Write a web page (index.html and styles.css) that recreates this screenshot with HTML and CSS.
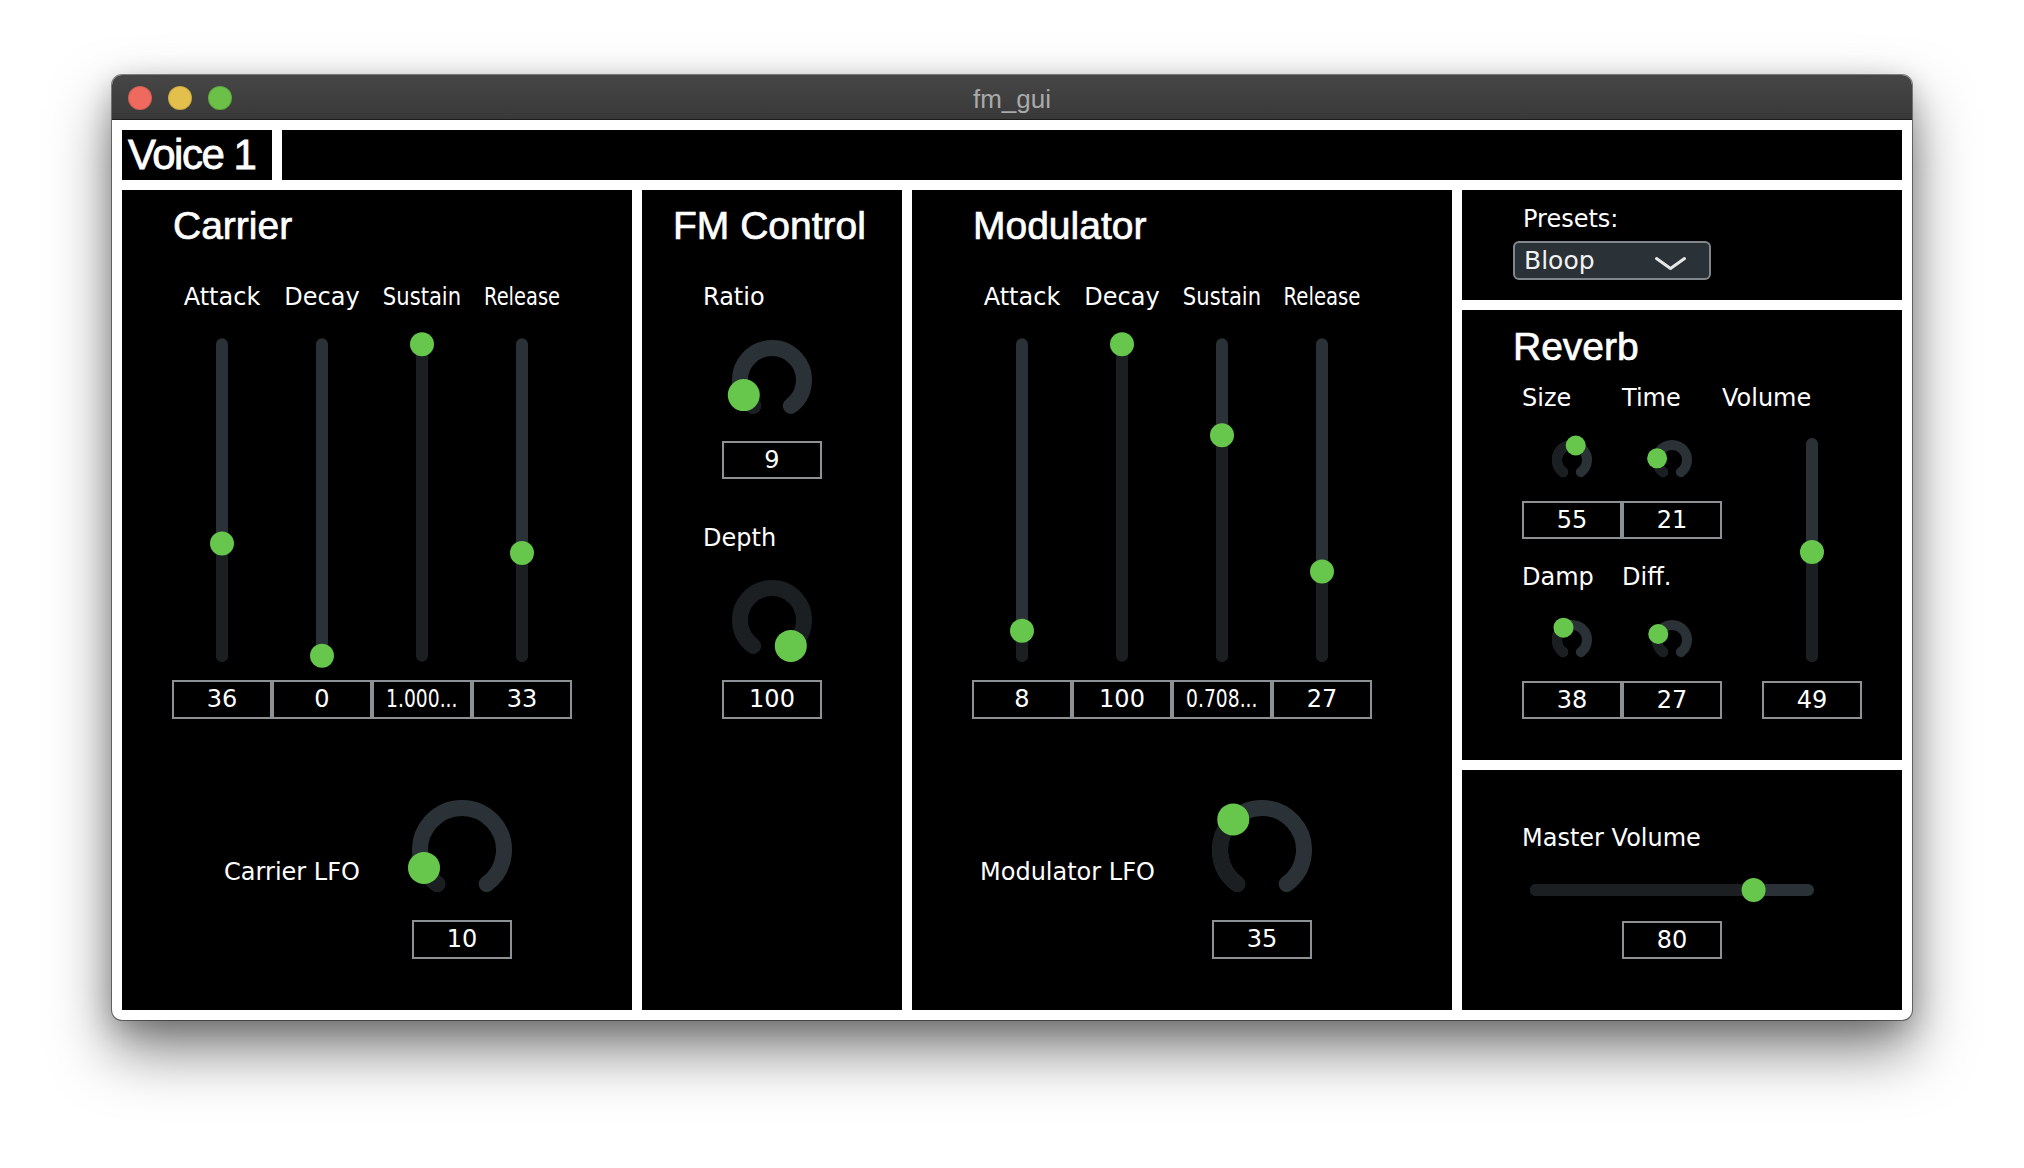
FILE: index.html
```html
<!DOCTYPE html>
<html>
<head>
<meta charset="utf-8">
<title>fm_gui</title>
<link rel="stylesheet" href="styles.css">
</head>
<body>
<div class="window">
  <div class="titlebar">
    <div class="lights"><span class="light red"></span><span class="light yellow"></span><span class="light green"></span></div>
    <div class="wtitle">fm_gui</div>
    <div></div>
  </div>
  <div class="content">
    <div class="voice-row">
      <div class="voice">Voice 1</div>
      <div class="voice-bar"></div>
    </div>
    <div class="main">
      <section class="panel carrier">
        <h2 class="ptitle">Carrier</h2>
        <div class="row4 labels">
          <span>Attack</span><span>Decay</span><span class="sq88">Sustain</span><span class="sq81">Release</span>
        </div>
        <div class="row4 sliders">
          <svg class="vs" width="24" height="340" viewBox="0 0 24 340"><line class="tr-bg" x1="12" y1="14.3" x2="12" y2="325.7"/><line class="tr-fg" x1="12" y1="325.7" x2="12" y2="213.6"/><circle class="th" cx="12" cy="213.6" r="12"/></svg>
          <svg class="vs" width="24" height="340" viewBox="0 0 24 340"><line class="tr-bg" x1="12" y1="14.3" x2="12" y2="325.7"/><circle class="th" cx="12" cy="325.7" r="12"/></svg>
          <svg class="vs" width="24" height="340" viewBox="0 0 24 340"><line class="tr-fg" x1="12" y1="14.3" x2="12" y2="325.7"/><circle class="th" cx="12" cy="14.3" r="12"/></svg>
          <svg class="vs" width="24" height="340" viewBox="0 0 24 340"><line class="tr-bg" x1="12" y1="14.3" x2="12" y2="325.7"/><line class="tr-fg" x1="12" y1="325.7" x2="12" y2="222.9"/><circle class="th" cx="12" cy="222.9" r="12"/></svg>
        </div>
        <div class="row4 boxes">
          <div class="vbox">36</div><div class="vbox">0</div><div class="vbox"><span class="sqt">1.000...</span></div><div class="vbox">33</div>
        </div>
        <div class="lfo">
          <div class="lfo-label">Carrier LFO</div>
          <div class="knobcol">
            <svg class="knob" width="100" height="100" viewBox="0 0 100 100"><path class="arc-bg" stroke-width="16" d="M25.31 83.98 A42 42 0 1 1 74.69 83.98"/><path class="arc-fg" stroke-width="16" d="M25.31 83.98 A42 42 0 0 1 12.00 67.88"/><circle class="th" cx="12.00" cy="67.88" r="16"/></svg>
            <div class="vbox">10</div>
          </div>
        </div>
      </section>

      <section class="panel fm">
        <h2 class="ptitle">FM Control</h2>
        <div class="fm-label first">Ratio</div>
        <svg class="knob k80" width="80" height="80" viewBox="0 0 80 80"><path class="arc-bg" stroke-width="16" d="M21.19 65.89 A32 32 0 1 1 58.81 65.89"/><path class="arc-fg" stroke-width="16" d="M21.19 65.89 A32 32 0 0 1 11.77 55.07"/><circle class="th" cx="11.77" cy="55.07" r="16"/></svg>
        <div class="vbox">9</div>
        <div class="fm-label second">Depth</div>
        <svg class="knob k80 kd" width="80" height="80" viewBox="0 0 80 80"><path class="arc-fg" stroke-width="16" d="M21.19 65.89 A32 32 0 1 1 58.81 65.89"/><circle class="th" cx="58.81" cy="65.89" r="16"/></svg>
        <div class="vbox">100</div>
      </section>

      <section class="panel mod">
        <h2 class="ptitle">Modulator</h2>
        <div class="row4 labels">
          <span>Attack</span><span>Decay</span><span class="sq88">Sustain</span><span class="sq82">Release</span>
        </div>
        <div class="row4 sliders">
          <svg class="vs" width="24" height="340" viewBox="0 0 24 340"><line class="tr-bg" x1="12" y1="14.3" x2="12" y2="325.7"/><line class="tr-fg" x1="12" y1="325.7" x2="12" y2="300.8"/><circle class="th" cx="12" cy="300.8" r="12"/></svg>
          <svg class="vs" width="24" height="340" viewBox="0 0 24 340"><line class="tr-fg" x1="12" y1="14.3" x2="12" y2="325.7"/><circle class="th" cx="12" cy="14.3" r="12"/></svg>
          <svg class="vs" width="24" height="340" viewBox="0 0 24 340"><line class="tr-bg" x1="12" y1="14.3" x2="12" y2="325.7"/><line class="tr-fg" x1="12" y1="325.7" x2="12" y2="105.2"/><circle class="th" cx="12" cy="105.2" r="12"/></svg>
          <svg class="vs" width="24" height="340" viewBox="0 0 24 340"><line class="tr-bg" x1="12" y1="14.3" x2="12" y2="325.7"/><line class="tr-fg" x1="12" y1="325.7" x2="12" y2="241.6"/><circle class="th" cx="12" cy="241.6" r="12"/></svg>
        </div>
        <div class="row4 boxes">
          <div class="vbox">8</div><div class="vbox">100</div><div class="vbox"><span class="sqt">0.708...</span></div><div class="vbox">27</div>
        </div>
        <div class="lfo">
          <div class="lfo-label">Modulator LFO</div>
          <div class="knobcol">
            <svg class="knob" width="100" height="100" viewBox="0 0 100 100"><path class="arc-bg" stroke-width="16" d="M25.31 83.98 A42 42 0 1 1 74.69 83.98"/><path class="arc-fg" stroke-width="16" d="M25.31 83.98 A42 42 0 0 1 21.25 19.38"/><circle class="th" cx="21.25" cy="19.38" r="16"/></svg>
            <div class="vbox">35</div>
          </div>
        </div>
      </section>

      <div class="rightcol">
        <section class="panel presets">
          <div class="pr-label">Presets:</div>
          <div class="combo">
            <span class="combo-text">Bloop</span>
            <svg class="chev" width="31" height="13" viewBox="0 0 31 13"><polyline points="1.5,1.5 15.5,11.5 29.5,1.5"/></svg>
          </div>
        </section>

        <section class="panel reverb">
          <h2 class="ptitle">Reverb</h2>
          <div class="rv-body">
            <div class="rv-left">
              <div class="rv-row rv-lab"><span>Size</span><span>Time</span></div>
              <div class="rv-row rv-knobs">
                <svg class="knob" width="40" height="40" viewBox="0 0 40 40"><path class="arc-bg" stroke-width="10" d="M11.18 32.14 A15 15 0 1 1 28.82 32.14"/><path class="arc-fg" stroke-width="10" d="M11.18 32.14 A15 15 0 0 1 23.73 5.47"/><circle class="th" cx="23.73" cy="5.47" r="10"/></svg>
                <svg class="knob" width="40" height="40" viewBox="0 0 40 40"><path class="arc-bg" stroke-width="10" d="M11.18 32.14 A15 15 0 1 1 28.82 32.14"/><path class="arc-fg" stroke-width="10" d="M11.18 32.14 A15 15 0 0 1 5.10 18.31"/><circle class="th" cx="5.10" cy="18.31" r="10"/></svg>
              </div>
              <div class="rv-row rv-boxes"><div class="vbox">55</div><div class="vbox">21</div></div>
              <div class="rv-row rv-lab second"><span>Damp</span><span>Diff.</span></div>
              <div class="rv-row rv-knobs second">
                <svg class="knob" width="40" height="40" viewBox="0 0 40 40"><path class="arc-bg" stroke-width="10" d="M11.18 32.14 A15 15 0 1 1 28.82 32.14"/><path class="arc-fg" stroke-width="10" d="M11.18 32.14 A15 15 0 0 1 11.49 7.65"/><circle class="th" cx="11.49" cy="7.65" r="10"/></svg>
                <svg class="knob" width="40" height="40" viewBox="0 0 40 40"><path class="arc-bg" stroke-width="10" d="M11.18 32.14 A15 15 0 1 1 28.82 32.14"/><path class="arc-fg" stroke-width="10" d="M11.18 32.14 A15 15 0 0 1 6.27 13.96"/><circle class="th" cx="6.27" cy="13.96" r="10"/></svg>
              </div>
              <div class="rv-row rv-boxes"><div class="vbox">38</div><div class="vbox">27</div></div>
            </div>
            <div class="rv-right">
              <div class="rv-lab">Volume</div>
              <svg class="vs" width="24" height="240" viewBox="0 0 24 240"><line class="tr-bg" x1="12" y1="14" x2="12" y2="226"/><line class="tr-fg" x1="12" y1="226" x2="12" y2="122.1"/><circle class="th" cx="12" cy="122.1" r="12"/></svg>
              <div class="vbox">49</div>
            </div>
          </div>
        </section>

        <section class="panel master">
          <div class="ms-label">Master Volume</div>
          <svg class="hs" width="296" height="24" viewBox="0 0 296 24"><line class="tr-bg" x1="12" y1="12" x2="284" y2="12"/><line class="tr-fg" x1="12" y1="12" x2="229.6" y2="12"/><circle class="th" cx="229.6" cy="12" r="12"/></svg>
          <div class="vbox">80</div>
        </section>
      </div>
    </div>
  </div>
</div>
</body>
</html>
```

FILE: styles.css
```css
* { box-sizing: border-box; }

html, body { background: #ffffff; }

body {
  margin: 0;
  padding: 75px 0 0 112px;
  width: 2024px;
  height: 1168px;
  overflow: hidden;
  font-family: "DejaVu Sans", sans-serif;
  color: #ffffff;
}

.window {
  width: 1800px;
  height: 945px;
  border-radius: 10px;
  background: #ffffff;
  overflow: hidden;
  box-shadow: 0 0 0 1px rgba(0, 0, 0, 0.45), 0 30px 60px rgba(0, 0, 0, 0.5), 0 8px 28px rgba(0, 0, 0, 0.22);
}

.titlebar {
  height: 45px;
  border-bottom: 1px solid #1c1c1c;
  background: linear-gradient(#464646, #393939);
  display: grid;
  grid-template-columns: 1fr auto 1fr;
  align-items: center;
}

.lights { display: flex; gap: 16px; padding-left: 16px; margin-top: 2px; }
.light { width: 24px; height: 24px; border-radius: 50%; }
.red { background: #ee6a5e; box-shadow: inset 0 0 0 1px rgba(0, 0, 0, 0.12); }
.yellow { background: #e2c04b; box-shadow: inset 0 0 0 1px rgba(0, 0, 0, 0.12); }
.green { background: #6cbf47; box-shadow: inset 0 0 0 1px rgba(0, 0, 0, 0.12); }

.wtitle {
  font-family: "Liberation Sans", sans-serif;
  font-size: 26px;
  line-height: 30px;
  padding-top: 4px;
  color: #a9a9a9;
}

.content {
  padding: 10px;
  display: flex;
  flex-direction: column;
  gap: 10px;
}

.voice-row { display: flex; gap: 10px; height: 50px; }
.voice {
  width: 150px;
  background: #000;
  font-family: "Liberation Sans", sans-serif;
  font-size: 42px;
  line-height: 50px;
  letter-spacing: -1.5px;
  padding-left: 6px;
  white-space: nowrap;
  -webkit-text-stroke: 0.8px #fff;
}
.voice-bar { flex: 1; background: #000; }

.main { display: flex; gap: 10px; height: 820px; }
.panel { background: #000; }

.carrier { width: 510px; padding-left: 50px; }
.fm { width: 260px; }
.mod { width: 540px; padding-left: 60px; }
.rightcol { width: 440px; display: flex; flex-direction: column; gap: 10px; }
.presets { height: 110px; padding: 17px 0 0 51px; }
.reverb { height: 450px; padding-left: 51px; }
.master { height: 240px; padding: 56px 0 0 60px; }

.ptitle {
  margin: 0;
  font-family: "Liberation Sans", sans-serif;
  font-weight: normal;
  font-size: 39px;
  line-height: 72px;
  height: 72px;
  padding-left: 1px;
  white-space: nowrap;
  -webkit-text-stroke: 0.7px #fff;
}
.fm .ptitle { padding-left: 31px; }
.reverb .ptitle { height: 74px; line-height: 74px; padding-left: 0; }

/* ADSR columns */
.row4 { display: grid; grid-template-columns: repeat(4, 100px); }

.labels {
  height: 68px;
  padding-top: 23px;
  font-size: 24px;
  line-height: 24px;
  white-space: nowrap;
}
.labels span { display: flex; justify-content: center; }

.sq88 { transform: scaleX(0.88); }
.sq82 { transform: scaleX(0.82); }
.sq81 { transform: scaleX(0.81); }

.sliders { height: 340px; justify-items: center; }
.boxes { margin-top: 10px; }
.boxes .vbox { height: 39px; line-height: 35px; }

svg { display: block; overflow: visible; }

.tr-bg { stroke: #2b3237; stroke-width: 12; stroke-linecap: round; }
.tr-fg { stroke: #1b1f22; stroke-width: 12; stroke-linecap: round; }
.th { fill: #67c74c; }
.arc-bg { fill: none; stroke: #2b3237; stroke-linecap: round; }
.arc-fg { fill: none; stroke: #1b1f22; stroke-linecap: round; }

.vbox {
  height: 38px;
  border: 2px solid #8b9195;
  font-size: 24px;
  line-height: 34px;
  text-align: center;
  white-space: nowrap;
  overflow: hidden;
  background: #000;
}
.sqt { display: inline-block; transform: scaleX(0.78); }

/* LFO row */
.lfo { display: flex; margin-top: 81px; }
.lfo-label {
  width: 240px;
  padding-top: 60px;
  font-size: 24px;
  line-height: 24px;
  text-align: center;
  white-space: nowrap;
}
.mod .lfo-label { text-align: left; padding-left: 8px; }
.knobcol { width: 100px; display: flex; flex-direction: column; }
.knobcol .vbox { margin-top: 20px; height: 39px; line-height: 35px; }

/* FM control */
.fm-label { padding-left: 61px; font-size: 24px; line-height: 24px; white-space: nowrap; }
.fm-label.first { height: 68px; padding-top: 23px; }
.fm-label.second { margin-top: 47px; }
.k80 { margin: 10px auto 0; }
.k80.kd { margin-top: 30px; }
.fm .vbox { width: 100px; margin: 21px auto 0; }
.fm .vbox:last-child { margin-top: 20px; height: 39px; line-height: 35px; }

/* Presets */
.pr-label { padding-left: 10px; font-size: 24px; line-height: 24px; }
.combo {
  margin-top: 10px;
  width: 198px;
  height: 39px;
  border: 2px solid #80888d;
  border-radius: 6px;
  background: #2a3237;
  display: flex;
  align-items: center;
  padding-left: 9px;
}
.combo-text { font-size: 25px; line-height: 30px; color: #f2f2f2; }
.chev { margin: 6px 23px 0 auto; }
.chev polyline { fill: none; stroke: #e4e6e7; stroke-width: 3; stroke-linecap: round; stroke-linejoin: round; }

/* Reverb */
.rv-body { display: flex; margin-left: 9px; margin-top: 2px; }
.rv-left { width: 200px; }
.rv-row { display: grid; grid-template-columns: 100px 100px; }
.rv-lab { height: 24px; font-size: 24px; line-height: 24px; white-space: nowrap; }
.rv-lab.second { margin-top: 26px; }
.rv-knobs { margin-top: 30px; height: 40px; justify-items: center; }
.rv-knobs.second { margin-top: 31px; }
.rv-boxes { margin-top: 21px; }
.rv-right { width: 140px; }
.rv-right .vs { margin: 20px 0 0 78px; }
.rv-right .vbox { margin: 11px 0 0 40px; width: 100px; }

/* Master */
.ms-label { font-size: 24px; line-height: 24px; white-space: nowrap; }
.hs { margin: 28px 0 0 2px; }
.master .vbox { margin: 19px 0 0 100px; width: 100px; }
```
